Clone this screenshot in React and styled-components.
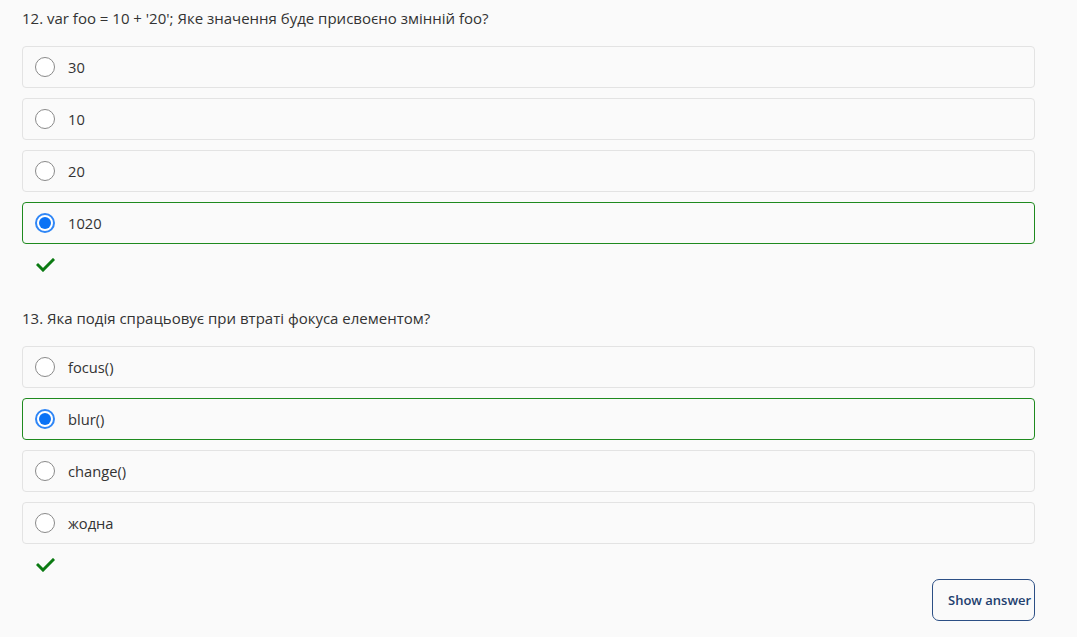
import React from "react";
import styled, { createGlobalStyle } from "styled-components";

const GlobalStyle = createGlobalStyle`
  body {
    margin: 0;
    background: #fafafa;
    font-family: "Open Sans", "Liberation Sans", sans-serif;
    color: #333;
  }
`;

const Page = styled.div`
  display: flex;
  flex-direction: column;
  padding: 8px 42px 16px 22px;
`;

const Question = styled.section`
  display: flex;
  flex-direction: column;
  & + & {
    margin-top: 36px;
  }
`;

const Title = styled.div`
  font-size: 15px;
  line-height: 20px;
  margin-bottom: 18px;
`;

const Options = styled.div`
  display: flex;
  flex-direction: column;
  gap: 10px;
`;

const OptionRow = styled.label`
  display: flex;
  align-items: center;
  gap: 13px;
  height: 42px;
  box-sizing: border-box;
  padding: 0 12px;
  border: 1px solid ${(p) => (p.$selected ? "#1f8a1f" : "#e3e3e3")};
  border-radius: 4px;
  font-size: 14.7px;
  color: #333;
`;

const Radio = styled.span`
  width: 20px;
  height: 20px;
  box-sizing: border-box;
  border-radius: 50%;
  flex-shrink: 0;
  background: #fff;
  border: ${(p) => (p.$checked ? "2px solid #2f86f6" : "1px solid #8a8a8a")};
  display: flex;
  align-items: center;
  justify-content: center;
  &::after {
    content: "";
    display: ${(p) => (p.$checked ? "block" : "none")};
    width: 12px;
    height: 12px;
    border-radius: 50%;
    background: #0a72f5;
  }
`;

const Check = styled.div`
  display: flex;
  height: 14px;
  margin: 14px 0 0 14px;
`;

const Footer = styled.div`
  display: flex;
  justify-content: flex-end;
  margin-top: 7px;
`;

const AnswerButton = styled.button`
  width: 103px;
  height: 42px;
  box-sizing: border-box;
  padding: 0 0 0 15px;
  border: 1px solid #2c4f85;
  border-radius: 7px;
  background: transparent;
  font-family: "Open Sans", "Liberation Sans", sans-serif;
  font-size: 13px;
  font-weight: 600;
  color: #22406e;
  text-align: left;
  white-space: nowrap;
  overflow: visible;
`;

const questions = [
  {
    title: "12. var foo = 10 + '20'; Яке значення буде присвоєно змінній foo?",
    options: ["30", "10", "20", "1020"],
    selected: 3,
  },
  {
    title: "13. Яка подія спрацьовує при втраті фокуса елементом?",
    options: ["focus()", "blur()", "change()", "жодна"],
    selected: 1,
  },
];

const CheckIcon = () => (
  <svg width="19" height="14" viewBox="0 0 19 14">
    <polyline
      points="2,7 7,12 17,2"
      fill="none"
      stroke="#0b7a12"
      strokeWidth="3"
      strokeLinecap="square"
    />
  </svg>
);

export default function App() {
  return (
    <>
      <GlobalStyle />
      <Page>
        {questions.map((q) => (
          <Question key={q.title}>
            <Title>{q.title}</Title>
            <Options>
              {q.options.map((o, i) => (
                <OptionRow key={o} $selected={i === q.selected}>
                  <Radio $checked={i === q.selected} />
                  {o}
                </OptionRow>
              ))}
            </Options>
            <Check>
              <CheckIcon />
            </Check>
          </Question>
        ))}
        <Footer>
          <AnswerButton>Show answer</AnswerButton>
        </Footer>
      </Page>
    </>
  );
}
